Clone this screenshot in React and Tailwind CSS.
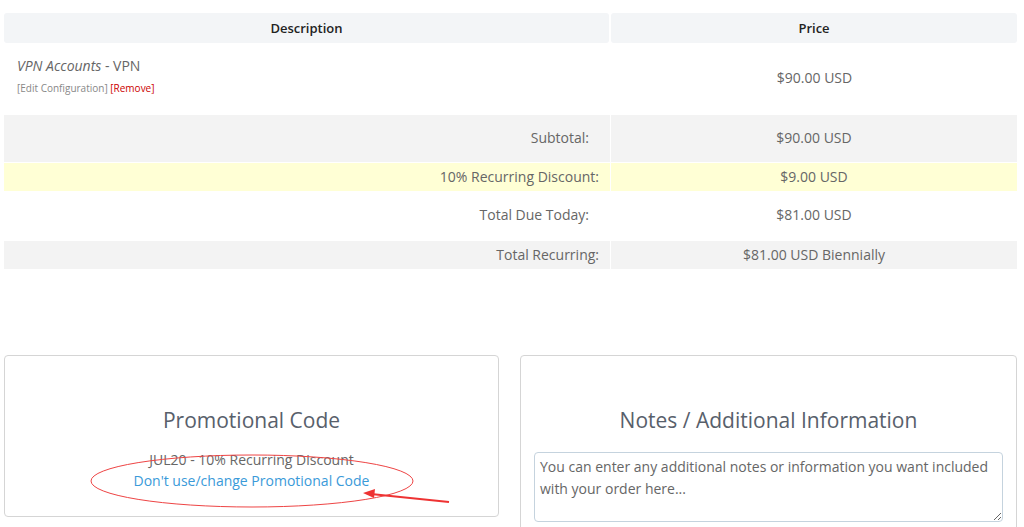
import React from 'react';

const ROWS = [
  { label: 'Subtotal:', value: '$90.00 USD', bg: 'bg-[#f3f3f3]', h: 'h-[47px]', pr: 'pr-[21px]', gap: '' },
  { label: '10% Recurring Discount:', value: '$9.00 USD', bg: 'bg-[#ffffd5]', h: 'h-[28px]', pr: 'pr-[11px]', gap: 'mt-[1px]' },
  { label: 'Total Due Today:', value: '$81.00 USD', bg: 'bg-white', h: 'h-[49px]', pr: 'pr-[21px]', gap: '' },
  { label: 'Total Recurring:', value: '$81.00 USD Biennially', bg: 'bg-[#f3f3f3]', h: 'h-[28px]', pr: 'pr-[11px]', gap: 'mt-[1px]' },
];

export default function App() {
  return (
    <div className="w-[1024px] h-[527px] overflow-hidden bg-white font-['Open_Sans',sans-serif] text-[#666]">
      <div className="pt-[13px] pl-[4px] w-[1017px]">
        {/* cart table header */}
        <div className="grid grid-cols-[605px_1fr] gap-[2px] h-[30px] text-[13px] font-semibold text-[#222]">
          <div className="bg-[#f3f5f7] rounded-[3px] flex items-center justify-center pt-[1px]">Description</div>
          <div className="bg-[#f3f5f7] rounded-[3px] flex items-center justify-center pt-[1px]">Price</div>
        </div>

        {/* product */}
        <div className="grid grid-cols-[607px_1fr] h-[72px]">
          <div className="pl-[13px] pt-[13px]">
            <div className="text-[14px] leading-[20px] text-[#666]">
              <em>VPN Accounts</em> - VPN
            </div>
            <div className="text-[10px] leading-[13px] mt-[6px]">
              <span className="text-[#888]">[Edit Configuration]</span>{' '}
              <span className="text-[#cc0000]">[Remove]</span>
            </div>
          </div>
          <div className="flex items-center justify-center text-[14px] pl-[1px] pb-[4px]">$90.00 USD</div>
        </div>

        {/* totals */}
        <div className="flex flex-col">
          {ROWS.map((r) => (
            <div key={r.label} className={`grid grid-cols-[606px_1fr] gap-[1px] ${r.h} ${r.gap}`}>
              <div className={`${r.bg} flex items-center justify-end ${r.pr} pb-[2px] text-[14px]`}>{r.label}</div>
              <div className={`${r.bg} flex items-center justify-center pb-[2px] text-[14px]`}>{r.value}</div>
            </div>
          ))}
        </div>

        {/* bottom panels */}
        <div className="grid grid-cols-[495px_497px] gap-[21px] mt-[86px]">
          <div className="relative border border-[#d5d5d5] rounded-[4px] h-[162px] flex flex-col items-center">
            <h2 className="mt-[51px] text-[21px] leading-[26px] text-[#58606b]">Promotional Code</h2>
            <div className="mt-[16px] text-[14px] leading-[21px] text-[#666]">JUL20 - 10% Recurring Discount</div>
            <a className="text-[14px] leading-[21px] text-[#3a9ad9]" href="#">Don't use/change Promotional Code</a>
            <svg className="absolute left-0 top-0 pointer-events-none" width="520" height="170" viewBox="0 0 520 170">
              <ellipse cx="247" cy="125" rx="161" ry="26" fill="none" stroke="#ee4444" strokeWidth="1" />
              <path d="M444 146 L366 138" stroke="#ee3333" strokeWidth="2" fill="none" />
              <path d="M358 137 L370 133 L369 142 Z" fill="#ee3333" />
            </svg>
          </div>
          <div className="border border-[#d5d5d5] rounded-[4px] h-[180px] flex flex-col items-center">
            <h2 className="mt-[51px] text-[21px] leading-[26px] text-[#58606b]">Notes / Additional Information</h2>
            <textarea
              className="mt-[19px] w-[469px] h-[70px] border border-[#c5d3de] rounded-[4px] px-[5px] py-[3px] text-[14px] leading-[22px] text-[#666] resize-y"
              defaultValue="You can enter any additional notes or information you want included with your order here..."
            />
          </div>
        </div>
      </div>
    </div>
  );
}
